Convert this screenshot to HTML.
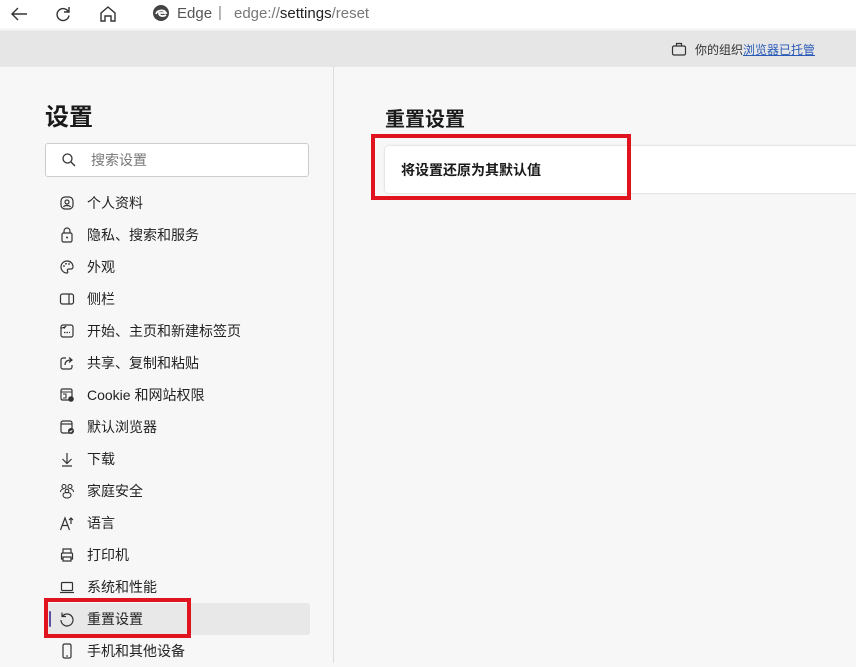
<!DOCTYPE html>
<html><head><meta charset="utf-8"><style>
*{margin:0;padding:0;box-sizing:border-box}
body{width:856px;height:663px;overflow:hidden;background:#f7f7f7;font-family:"Liberation Sans","Noto Sans CJK SC",sans-serif;color:#1a1a1a;position:relative}
.top{position:absolute;left:0;top:0;width:856px;height:28px;background:#fff}
.gray{position:absolute;left:0;top:30px;width:856px;height:37px;background:#e6e6e6;border-top:1px solid #eee}
.side{position:absolute;left:0;top:67px;width:334px;height:596px;background:#f7f7f7;border-right:1px solid #dcdcdc}
.item{position:absolute;left:46px;width:264px;height:32px;font-size:14px;line-height:32px;padding-left:41px;color:#222}
.item svg{position:absolute;left:13px;top:8px}
.red{position:absolute;border:4px solid #e0141e}
</style></head><body>
<div class="top"></div>
<svg style="position:absolute;left:8px;top:4px" width="22" height="20" viewBox="0 0 22 20"><path d="M19 10H4M10 4L4 10l6 6" fill="none" stroke="#333" stroke-width="1.4"/></svg>
<svg style="position:absolute;left:53px;top:4px" width="20" height="20" viewBox="0 0 20 20"><path d="M15.5 8A6 6 0 1 0 16 11.5M16 3v5h-5" fill="none" stroke="#333" stroke-width="1.4"/></svg>
<svg style="position:absolute;left:98px;top:4px" width="20" height="20" viewBox="0 0 20 20"><path d="M3 9l7-6 7 6v8h-4v-5h-6v5H3z" fill="none" stroke="#333" stroke-width="1.4"/></svg>
<div style="position:absolute;left:135px;top:0;width:721px;height:27px;background:#fff;border-radius:14px 0 0 14px"></div>
<svg style="position:absolute;left:152px;top:4px" width="18" height="18" viewBox="0 0 18 18"><circle cx="9" cy="9" r="8" fill="#444"/><path d="M4 10c1-4 8-5 10-1H7c0 3 4 4 7 2" fill="none" stroke="#fff" stroke-width="1.8"/></svg>
<div style="position:absolute;left:177px;top:5px;font-size:15px;color:#555">Edge</div>
<div style="position:absolute;left:218px;top:4px;font-size:15px;color:#888">|</div>
<div style="position:absolute;left:234px;top:5px;font-size:15px;color:#777">edge://<span style="color:#222">settings</span>/reset</div>
<div class="gray"></div>
<svg style="position:absolute;left:671px;top:42px" width="16" height="14" viewBox="0 0 16 14"><rect x="1.5" y="4" width="13" height="9" rx="1.5" fill="none" stroke="#333" stroke-width="1.2"/><path d="M5.5 4V1.5h5V4" fill="none" stroke="#333" stroke-width="1.2"/></svg>
<div style="position:absolute;left:695px;top:41px;font-size:12px;color:#333">你的组织<span style="color:#2b5bb8;text-decoration:underline">浏览器已托管</span></div>
<div class="side"></div>
<div style="position:absolute;left:45px;top:97px;font-size:24px;font-weight:bold">设置</div>
<div style="position:absolute;left:45px;top:143px;width:264px;height:34px;background:#fff;border:1px solid #ccc;border-radius:3px"></div>
<svg style="position:absolute;left:61px;top:152px" width="16" height="16" viewBox="0 0 16 16"><circle cx="6.5" cy="6.5" r="4.5" fill="none" stroke="#333" stroke-width="1.3"/><path d="M10 10l4 4" stroke="#333" stroke-width="1.3"/></svg>
<div style="position:absolute;left:91px;top:150px;font-size:14px;color:#777">搜索设置</div>

<div class="item" style="top:187px"><svg width="16" height="16" viewBox="0 0 16 16"><rect x="2" y="2" width="12" height="12" rx="4" fill="none" stroke="#333" stroke-width="1.2"/><circle cx="8" cy="7" r="2" fill="none" stroke="#333" stroke-width="1.2"/><path d="M4.5 12c1-2 6-2 7 0" fill="none" stroke="#333" stroke-width="1.2"/></svg>个人资料</div>
<div class="item" style="top:219px"><svg width="16" height="16" viewBox="0 0 16 16"><rect x="3" y="6" width="10" height="9" rx="1.5" fill="none" stroke="#333" stroke-width="1.2"/><path d="M5 6V4a3 3 0 0 1 6 0v2" fill="none" stroke="#333" stroke-width="1.2"/><circle cx="8" cy="10.5" r="1" fill="#333"/></svg>隐私、搜索和服务</div>
<div class="item" style="top:251px"><svg width="16" height="16" viewBox="0 0 16 16"><path d="M8 2a6 6 0 1 0 0 12c1 0 1-1 .5-2s0-2 1.5-2h2a2 2 0 0 0 2-2C14 4 11 2 8 2z" fill="none" stroke="#333" stroke-width="1.2"/><circle cx="5" cy="7" r=".9" fill="#333"/><circle cx="7" cy="4.8" r=".9" fill="#333"/><circle cx="10" cy="5" r=".9" fill="#333"/></svg>外观</div>
<div class="item" style="top:283px"><svg width="16" height="16" viewBox="0 0 16 16"><rect x="1.5" y="3" width="13" height="10" rx="2" fill="none" stroke="#333" stroke-width="1.2"/><path d="M10 3v10" stroke="#333" stroke-width="1.2"/></svg>侧栏</div>
<div class="item" style="top:315px"><svg width="16" height="16" viewBox="0 0 16 16"><rect x="2" y="2" width="12" height="12" rx="2" fill="none" stroke="#333" stroke-width="1.2"/><path d="M2 5h4l1-2M5 9.5h6" stroke="#333" stroke-width="1.2" stroke-dasharray="1.5 1"/></svg>开始、主页和新建标签页</div>
<div class="item" style="top:347px"><svg width="16" height="16" viewBox="0 0 16 16"><path d="M7 3H4a2 2 0 0 0-2 2v7a2 2 0 0 0 2 2h7a2 2 0 0 0 2-2V10M6 10c0-4 3-5 6-5M10 2.5L13 5l-3 2.5" fill="none" stroke="#333" stroke-width="1.2"/></svg>共享、复制和粘贴</div>
<div class="item" style="top:379px"><svg width="16" height="16" viewBox="0 0 16 16"><rect x="2" y="2" width="11" height="11" rx="1.5" fill="none" stroke="#333" stroke-width="1.2"/><path d="M2 5h11M4 7h3v4H4" fill="none" stroke="#333" stroke-width="1.1"/><circle cx="12" cy="12" r="2.8" fill="#333"/></svg>Cookie 和网站权限</div>
<div class="item" style="top:411px"><svg width="16" height="16" viewBox="0 0 16 16"><rect x="2" y="2" width="11" height="12" rx="2" fill="none" stroke="#333" stroke-width="1.2"/><path d="M2 5h11" stroke="#333" stroke-width="1.2"/><circle cx="12" cy="12" r="3" fill="#333"/><path d="M10.7 12l1 1 1.6-1.8" fill="none" stroke="#fff" stroke-width=".9"/></svg>默认浏览器</div>
<div class="item" style="top:443px"><svg width="16" height="16" viewBox="0 0 16 16"><path d="M8 2v10M3.5 8L8 12.5 12.5 8M3 15h10" fill="none" stroke="#333" stroke-width="1.2"/></svg>下载</div>
<div class="item" style="top:475px"><svg width="16" height="16" viewBox="0 0 16 16"><circle cx="5" cy="3.5" r="2" fill="none" stroke="#333" stroke-width="1.1"/><circle cx="11" cy="3.5" r="2" fill="none" stroke="#333" stroke-width="1.1"/><circle cx="8" cy="8" r="1.8" fill="none" stroke="#333" stroke-width="1.1"/><path d="M1.5 9c0-2 1.5-3 3-3M14.5 9c0-2-1.5-3-3-3M4 12c0-2 2-2.5 4-2.5s4 .5 4 2.5-2 3-4 3-4-1-4-3z" fill="none" stroke="#333" stroke-width="1.1"/></svg>家庭安全</div>
<div class="item" style="top:507px"><svg width="16" height="16" viewBox="0 0 16 16"><path d="M1.5 15L6 3l4.5 12M3.2 10.5h5.6M12 9V3M10 5l2-2 2 2" fill="none" stroke="#333" stroke-width="1.2"/></svg>语言</div>
<div class="item" style="top:539px"><svg width="16" height="16" viewBox="0 0 16 16"><path d="M4 6V2h8v4M4 12H2.5V7a1 1 0 0 1 1-1h9a1 1 0 0 1 1 1v5H12M4 10h8v4H4z" fill="none" stroke="#333" stroke-width="1.2"/></svg>打印机</div>
<div class="item" style="top:571px"><svg width="16" height="16" viewBox="0 0 16 16"><rect x="2.5" y="3.5" width="11" height="8" rx="1" fill="none" stroke="#333" stroke-width="1.2"/><path d="M1 13.5h14" stroke="#333" stroke-width="1.2"/></svg>系统和性能</div>
<div class="item" style="top:603px;background:#e8e8e8;border-radius:3px"><div style="position:absolute;left:3px;top:8px;width:2px;height:16px;background:#5a4fa0;border-radius:1px"></div><svg width="16" height="16" viewBox="0 0 16 16"><path d="M3.5 5A6 6 0 1 1 2 9M3 1.5V5.5h4" fill="none" stroke="#333" stroke-width="1.2"/></svg>重置设置</div>
<div class="item" style="top:635px"><svg width="16" height="16" viewBox="0 0 16 16"><rect x="4" y="1" width="8" height="14" rx="1.5" fill="none" stroke="#333" stroke-width="1.2"/><path d="M7 13h2" stroke="#333" stroke-width="1"/></svg>手机和其他设备</div>

<div style="position:absolute;left:385px;top:103px;font-size:20px;font-weight:bold">重置设置</div>
<div style="position:absolute;left:385px;top:146px;width:480px;height:47px;background:#fff;border-radius:4px;box-shadow:0 0 2px rgba(0,0,0,.2)"></div>
<div style="position:absolute;left:401px;top:160px;font-size:14px;font-weight:bold">将设置还原为其默认值</div>

<div class="red" style="left:371px;top:134px;width:260px;height:66px"></div>
<div class="red" style="left:44px;top:598px;width:147px;height:40px"></div>
</body></html>
